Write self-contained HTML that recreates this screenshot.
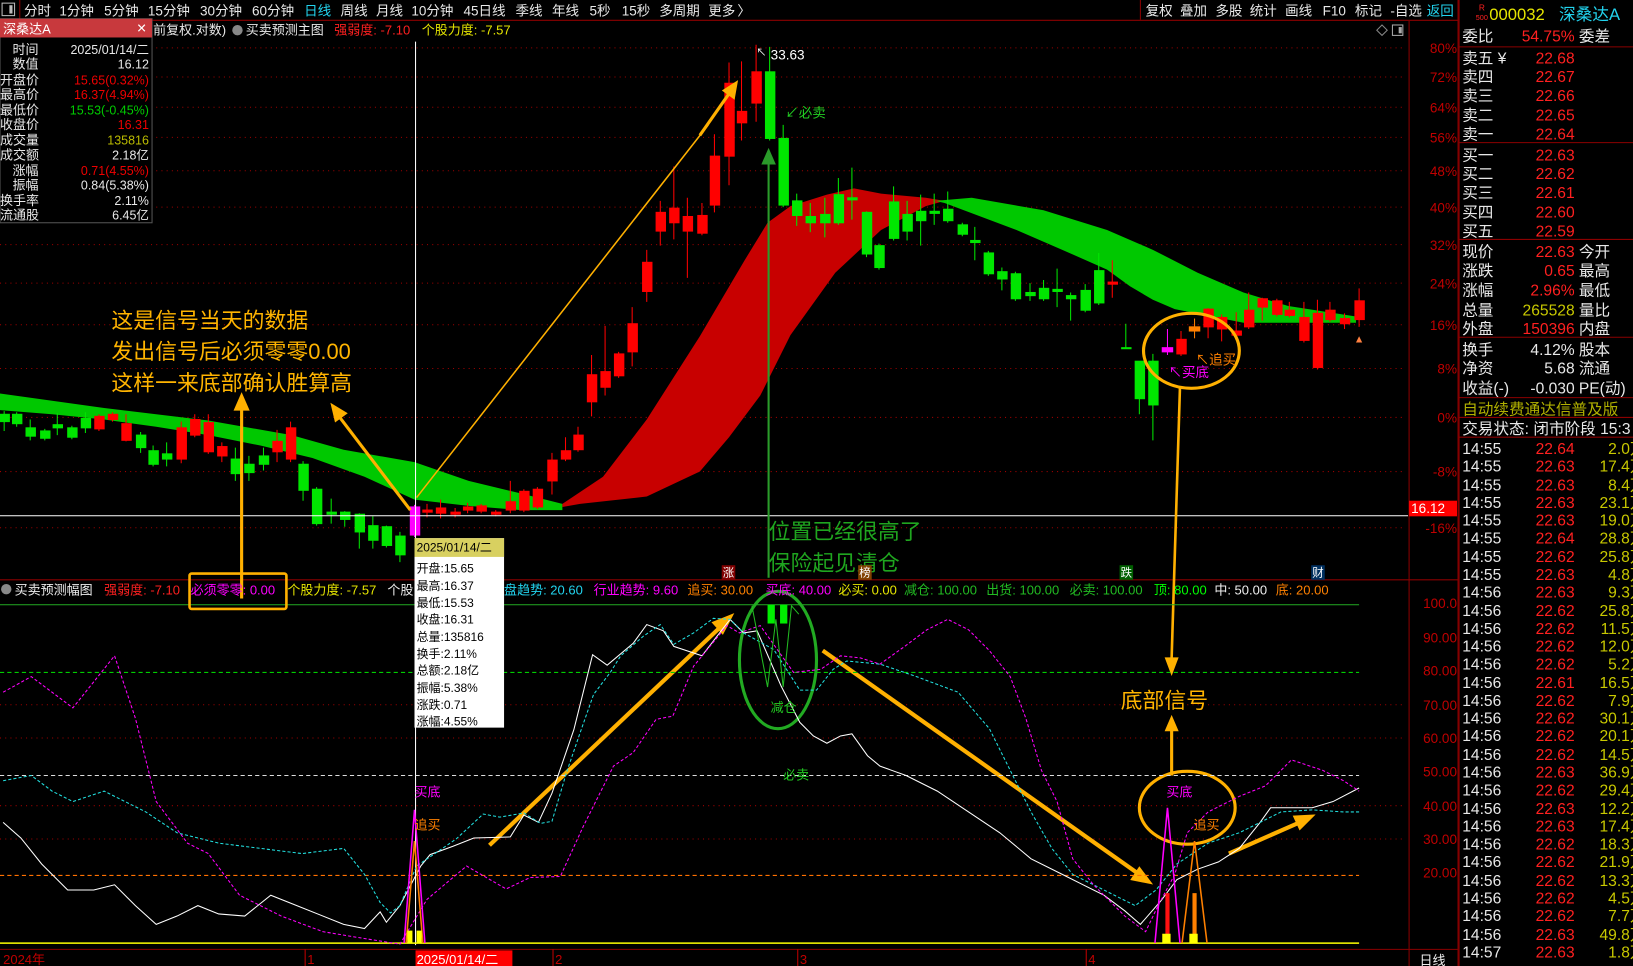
<!DOCTYPE html>
<html><head><meta charset="utf-8"><style>
html,body{margin:0;padding:0;background:#000;overflow:hidden}
svg{display:block}
text{font-family:"Liberation Sans","Noto Sans CJK SC",sans-serif}
</style></head><body>
<svg width="1633" height="966" viewBox="0 0 1568 928" preserveAspectRatio="none" xmlns="http://www.w3.org/2000/svg">
<rect width="1568" height="928" fill="#000"/>
<!-- top bar -->
<g font-size="13" fill="#e8e8e8">
<rect x="2" y="3" width="12" height="12" fill="none" stroke="#bbb"/><rect x="9" y="5" width="3" height="8" fill="#bbb"/>
<line x1="19" y1="0" x2="19" y2="19" stroke="#8b0000"/>
<text x="23" y="15">分时</text><text x="57" y="15">1分钟</text><text x="100" y="15">5分钟</text><text x="142" y="15">15分钟</text><text x="192" y="15">30分钟</text><text x="242" y="15">60分钟</text><text x="292" y="15" fill="#22d3ee">日线</text><text x="327" y="15">周线</text><text x="361" y="15">月线</text><text x="395" y="15">10分钟</text><text x="445" y="15">45日线</text><text x="495" y="15">季线</text><text x="530" y="15">年线</text><text x="566" y="15">5秒</text><text x="597" y="15">15秒</text><text x="633" y="15">多周期</text><text x="680" y="15">更多</text><text x="708" y="15">〉</text>
<text x="1100" y="15">复权</text><text x="1133" y="15">叠加</text><text x="1167" y="15">多股</text><text x="1200" y="15">统计</text><text x="1234" y="15">画线</text><text x="1270" y="15">F10</text><text x="1301" y="15">标记</text><text x="1335" y="15">-自选</text><text x="1370" y="15" fill="#22d3ee">返回</text>
</g>
<line x1="0" y1="19.5" x2="1400" y2="19.5" stroke="#8b0000"/>
<line x1="1095" y1="0" x2="1095" y2="19" stroke="#8b0000"/><line x1="1400" y1="0" x2="1400" y2="928" stroke="#8b0000"/>
<!-- second header -->
<g font-size="12.5">
<text x="147" y="33" fill="#e8e8e8">前复权.对数)</text>
<circle cx="228" cy="29" r="5" fill="#888"/>
<text x="236" y="33" fill="#e8e8e8">买卖预测主图</text>
<text x="321" y="33" fill="#ff2020">强弱度: -7.10</text>
<text x="405" y="33" fill="#e6e600">个股力度: -7.57</text>
</g>
<path d="M1322 29l5-5 5 5-5 5z" fill="none" stroke="#888"/><rect x="1337" y="24" width="10" height="10" fill="none" stroke="#aaa"/><rect x="1343" y="26" width="3" height="6" fill="#aaa"/>
<!-- axis column -->
<line x1="1353" y1="20" x2="1353" y2="928" stroke="#8b0000"/>
<line x1="0" y1="557" x2="1400" y2="557" stroke="#8b0000"/>
<!-- grid main -->
<g stroke="#a00000" stroke-dasharray="1,4">
<line x1="0" y1="46" x2="1350" y2="46"/><line x1="0" y1="74" x2="1350" y2="74"/><line x1="0" y1="103" x2="1350" y2="103"/><line x1="0" y1="132" x2="1350" y2="132"/><line x1="0" y1="164" x2="1350" y2="164"/><line x1="0" y1="199" x2="1350" y2="199"/><line x1="0" y1="235" x2="1350" y2="235"/><line x1="0" y1="272" x2="1350" y2="272"/><line x1="0" y1="312" x2="1350" y2="312"/><line x1="0" y1="354" x2="1350" y2="354"/><line x1="0" y1="401" x2="1350" y2="401"/><line x1="0" y1="453" x2="1350" y2="453"/><line x1="0" y1="507" x2="1350" y2="507"/>
<line x1="0" y1="709" x2="1350" y2="709"/><line x1="0" y1="677" x2="1350" y2="677"/><line x1="0" y1="774" x2="1350" y2="774"/><line x1="0" y1="806" x2="1350" y2="806"/>
</g>
<g font-size="13" fill="#c00000" text-anchor="end">
<text x="1399" y="51">80%</text><text x="1399" y="79">72%</text><text x="1399" y="108">64%</text><text x="1399" y="137">56%</text><text x="1399" y="169">48%</text><text x="1399" y="204">40%</text><text x="1399" y="240">32%</text><text x="1399" y="277">24%</text><text x="1399" y="317">16%</text><text x="1399" y="359">8%</text><text x="1399" y="406">0%</text><text x="1399" y="458">-8%</text><text x="1399" y="512">-16%</text>
<text x="1399" y="584">100.0</text><text x="1399" y="617">90.00</text><text x="1399" y="649">80.00</text><text x="1399" y="682">70.00</text><text x="1399" y="714">60.00</text><text x="1399" y="746">50.00</text><text x="1399" y="779">40.00</text><text x="1399" y="811">30.00</text><text x="1399" y="843">20.00</text>
</g>
<!-- bands -->
<path d="M0 378 L100 392 L200 404 L280 418 L330 432 L398 444 L450 462 L500 474 L540 484 L540 490 L500 490 L450 486 L398 480 L350 458 L300 440 L250 428 L200 418 L150 410 L100 403 L50 398 L0 394Z" fill="#00c800"/>
<path d="M540 484 L579 458 L621 403 L672 323 L715 250 L737 214 L759 198 L794 187 L820 181 L846 186 L889 190 L907 193 L889 198 L846 221 L802 262 L759 322 L730 380 L700 420 L672 453 L621 477 L557 484 L540 487Z" fill="#c80000"/>
<path d="M898 193 L933 190 L1002 202 L1063 221 L1107 240 L1150 262 L1194 281 L1237 294 L1302 304 L1302 310 L1194 310 L1128 297 L1107 288 L1085 275 L1063 259 L1020 240 L976 221 L907 195Z" fill="#00c800"/>
<!-- candles green -->
<g fill="#00e600" stroke="#00e600" stroke-width="1">
<path d="M4 395V414M16 396V410M29 403V423M43 412V423M55 397V418M69 409V422M82 396V416M135 415V435M147 428V448M160 425V448M226 430V462M239 438V462M253 430V452M291 443V481M304 468V505M318 479V503M331 491V506M345 493V527M358 496V527M371 505V526M384 511V540M739 45V135M752 120V199M765 186V217M778 195V223M792 190V228M805 171V216M818 161V211M832 203V247M844 234V259M858 179V231M871 193V231M884 187V236M897 186V216M910 184V214M924 214V227M936 218V250M949 241V265M962 257V279M975 261V289M989 272V289M1002 269V289M1015 258V295M1028 281V308M1042 273V300M1055 243V293M1081 311V335M1094 347V398M1107 340V423"/>
<rect x="0" y="398" width="9" height="7"/><rect x="12" y="398" width="9" height="9"/><rect x="25" y="411" width="9" height="8"/><rect x="39" y="414" width="9" height="7"/><rect x="51" y="408" width="9" height="3"/><rect x="65" y="411" width="9" height="9"/><rect x="78" y="402" width="9" height="9"/><rect x="131" y="418" width="9" height="12"/><rect x="143" y="433" width="9" height="13"/><rect x="156" y="436" width="9" height="5"/><rect x="222" y="441" width="9" height="14"/><rect x="235" y="446" width="9" height="8"/><rect x="249" y="438" width="9" height="8"/><rect x="287" y="446" width="9" height="25"/><rect x="300" y="470" width="9" height="33"/><rect x="314" y="492" width="9" height="2"/><rect x="327" y="492" width="9" height="7"/><rect x="341" y="494" width="9" height="17"/><rect x="354" y="505" width="9" height="14"/><rect x="367" y="506" width="9" height="18"/><rect x="380" y="515" width="9" height="18"/>
<rect x="735" y="69" width="9" height="64"/><rect x="748" y="133" width="9" height="64"/><rect x="761" y="193" width="9" height="14"/><rect x="774" y="208" width="9" height="6"/><rect x="788" y="206" width="9" height="8"/><rect x="801" y="187" width="9" height="27"/><rect x="814" y="190" width="9" height="2"/><rect x="828" y="204" width="9" height="40"/><rect x="840" y="236" width="9" height="21"/><rect x="854" y="194" width="9" height="35"/><rect x="867" y="206" width="9" height="16"/><rect x="880" y="203" width="9" height="9"/><rect x="893" y="203" width="9" height="2"/><rect x="906" y="201" width="9" height="11"/><rect x="920" y="216" width="9" height="9"/><rect x="932" y="231" width="9" height="2"/><rect x="945" y="243" width="9" height="20"/><rect x="958" y="261" width="9" height="7"/><rect x="971" y="263" width="9" height="24"/><rect x="985" y="281" width="9" height="3"/><rect x="998" y="277" width="9" height="10"/><rect x="1011" y="278" width="9" height="2"/><rect x="1024" y="284" width="9" height="3"/><rect x="1038" y="279" width="9" height="19"/><rect x="1051" y="260" width="9" height="31"/><rect x="1077" y="334" width="9" height="1"/><rect x="1090" y="347" width="9" height="36"/><rect x="1103" y="347" width="9" height="42"/>
</g>
<g fill="#ff0000" stroke="#ff0000">
<path d="M95 398V414M108 396V405M121 398V424M174 405V445M187 398V420M200 398V436M213 425V444M266 413V444M279 405V444M410 484V497M423 480V498M437 488V497M449 483V493M462 484V493M476 490V496M490 462V493M503 470V492M516 468V489M530 435V475M543 420V443M555 410V434M568 341V400M581 313V380M594 338V363M607 295V352M621 240V290M634 193V236M647 160V230M660 190V267M674 195V226M686 129V204M700 60V178M712 59V135M726 43V117M1068 250V286M1134 318V342M1160 296V325M1173 302V328M1187 300V324M1199 281V316M1212 286V308M1226 287V304M1238 290V305M1252 290V329M1265 288V355M1277 290V309M1291 301V316M1305 277V314"/>
<rect x="91" y="400" width="9" height="12"/><rect x="104" y="398" width="9" height="5"/><rect x="117" y="407" width="9" height="16"/><rect x="170" y="411" width="9" height="30"/><rect x="183" y="403" width="9" height="15"/><rect x="196" y="406" width="9" height="28"/><rect x="209" y="429" width="9" height="9"/><rect x="262" y="424" width="9" height="10"/><rect x="275" y="411" width="9" height="30"/>
<rect x="406" y="490" width="9" height="2"/><rect x="419" y="488" width="9" height="5"/><rect x="433" y="492" width="9" height="2"/><rect x="445" y="487" width="9" height="3"/><rect x="458" y="486" width="9" height="5"/><rect x="472" y="492" width="9" height="2"/><rect x="486" y="482" width="9" height="8"/><rect x="499" y="472" width="9" height="18"/><rect x="512" y="470" width="9" height="17"/><rect x="526" y="442" width="9" height="20"/><rect x="539" y="433" width="9" height="8"/><rect x="551" y="418" width="9" height="14"/><rect x="564" y="360" width="9" height="26"/><rect x="577" y="357" width="9" height="15"/><rect x="590" y="340" width="9" height="21"/><rect x="603" y="311" width="9" height="27"/><rect x="617" y="252" width="9" height="28"/><rect x="630" y="204" width="9" height="18"/><rect x="643" y="200" width="9" height="14"/><rect x="656" y="208" width="9" height="14"/><rect x="670" y="207" width="9" height="17"/><rect x="682" y="150" width="9" height="47"/><rect x="696" y="80" width="9" height="70"/><rect x="708" y="107" width="9" height="11"/><rect x="722" y="69" width="9" height="30"/>
<rect x="1064" y="271" width="9" height="2"/><rect x="1130" y="326" width="9" height="14"/><rect x="1156" y="297" width="9" height="17"/><rect x="1169" y="305" width="9" height="11"/><rect x="1183" y="318" width="9" height="4"/><rect x="1195" y="298" width="9" height="16"/><rect x="1208" y="287" width="9" height="8"/><rect x="1222" y="289" width="9" height="13"/><rect x="1234" y="298" width="9" height="5"/><rect x="1248" y="305" width="9" height="22"/><rect x="1261" y="301" width="9" height="52"/><rect x="1273" y="298" width="9" height="9"/><rect x="1287" y="306" width="9" height="5"/><rect x="1301" y="289" width="9" height="18"/>
</g>
<g fill="#ff00ff" stroke="#ff00ff"><path d="M398 485V516M1121 316V341"/><rect x="394" y="487" width="9" height="27"/><rect x="1116" y="334" width="10" height="4"/></g>
<g fill="#ff8000" stroke="#ff8000"><path d="M1147 306V325"/><rect x="1142" y="314" width="10" height="4"/></g>
<path d="M1305 323l-3 6h6z" fill="#ff8040"/>
<!-- cursor lines -->
<line x1="399" y1="40" x2="399" y2="908" stroke="#fff"/>
<line x1="0" y1="495.5" x2="1352" y2="495.5" stroke="#fff"/>
<rect x="1353" y="481" width="46" height="15" fill="#ff0000"/><text x="1355" y="493" font-size="13" fill="#fff">16.12</text>
<!-- main annotations -->
<text x="740" y="57" font-size="13" fill="#fff">33.63</text><text x="726" y="54" font-size="10" fill="#fff">↖</text>
<text x="754" y="113" font-size="13" fill="#22cc22">↙必卖</text>
<g font-size="21" fill="#ffb400">
<text x="107" y="315">这是信号当天的数据</text>
<text x="107" y="345">发出信号后必须零零0.00</text>
<text x="107" y="375">这样一来底部确认胜算高</text>
</g>
<g stroke="#ffb000" fill="#ffb000">
<line x1="232" y1="575" x2="232" y2="392" stroke-width="3"/><path d="M232 378l-7 16h14z"/>
<line x1="394" y1="490" x2="324" y2="398" stroke-width="3"/><path d="M318 388l4 17 11-8z"/>
<line x1="400" y1="478" x2="680" y2="120" stroke-width="1.5"/><line x1="672" y1="130" x2="700" y2="90" stroke-width="3"/><path d="M708 78l-14 9 11 8z"/>
<line x1="1133" y1="372" x2="1125" y2="632" stroke-width="2.5"/><path d="M1125 648l-6-16h12z"/>
<line x1="1125" y1="745" x2="1125" y2="700" stroke-width="3"/><path d="M1125 688l-6 14h12z"/>
<line x1="470" y1="812" x2="690" y2="604" stroke-width="4"/><path d="M704 590l-20 8 10 11z"/>
<line x1="790" y1="625" x2="1094" y2="840" stroke-width="4"/><path d="M1106 849l-20-4 8-12z"/>
<line x1="1180" y1="820" x2="1248" y2="790" stroke-width="4"/><path d="M1262 783l-20 1 6 13z"/>
</g>
<g fill="none" stroke-width="3">
<ellipse cx="1144" cy="337" rx="46" ry="36" stroke="#ffb000"/>
<ellipse cx="1140" cy="776" rx="46" ry="35" stroke="#ffb000"/>
<ellipse cx="747" cy="634" rx="37" ry="66" stroke="#22aa22"/>
</g>
<line x1="738" y1="555" x2="738" y2="156" stroke="#2a9b2a" stroke-width="2"/><path d="M738 142l-7 16h14z" fill="#2a9b2a"/>
<g font-size="21" fill="#1fa51f"><text x="738" y="518">位置已经很高了</text><text x="738" y="548">保险起见清仓</text></g>
<text x="1148" y="350" font-size="13" fill="#ff8000">↖追买</text>
<text x="1122" y="362" font-size="13" fill="#ff00ff">↖买底</text>
<text x="1076" y="680" font-size="21" fill="#ffb400">底部信号</text>
<g font-size="11" fill="#fff">
<rect x="693" y="543" width="13" height="14" fill="#800000"/><text x="694" y="554">涨</text>
<rect x="824" y="543" width="13" height="14" fill="#804000"/><text x="825" y="554">榜</text>
<rect x="1075" y="543" width="13" height="14" fill="#006000"/><text x="1076" y="554">跌</text>
<rect x="1259" y="543" width="13" height="14" fill="#003060"/><text x="1260" y="554">财</text>
</g>
<!-- indicator -->
<line x1="0" y1="581" x2="1305" y2="581" stroke="#22aa22"/>
<g stroke-dasharray="4,3"><line x1="0" y1="646" x2="1305" y2="646" stroke="#00cc00"/><line x1="0" y1="745" x2="1305" y2="745" stroke="#ddd"/><line x1="0" y1="841" x2="1305" y2="841" stroke="#ff7000"/></g>
<line x1="0" y1="906" x2="1305" y2="906" stroke="#ffff00" stroke-width="1.5"/>
<g fill="none" stroke-width="1">
<polyline stroke="#fff" points="3,790 20,805 40,830 65,855 90,855 110,850 130,870 150,888 170,880 190,870 210,878 235,880 260,860 285,870 305,878 330,888 350,892 365,876 371,886 384,870 404,832 413,821 435,813 455,805 490,804 503,783 517,790 530,762 551,701 569,629 583,639 608,618 621,600 637,606 647,621 674,630 701,595 714,608 727,606 750,659 768,694 781,707 794,714 807,707 818,705 833,726 845,736 870,745 900,760 930,780 960,800 990,825 1020,840 1040,850 1060,860 1080,875 1095,888 1115,865 1130,845 1150,835 1170,828 1190,815 1210,790 1220,776 1260,776 1280,770 1305,757"/>
<polyline stroke="#22e0e0" stroke-dasharray="3,2" points="3,750 30,745 50,760 70,770 100,760 140,780 170,800 210,810 250,815 290,820 330,815 350,840 365,867 375,877 384,870 400,832 438,806 464,782 480,785 503,781 519,791 530,789 544,742 557,704 570,667 586,646 596,630 618,611 634,600 647,619 666,608 685,594 701,595 714,608 743,624 768,663 784,663 800,643 813,635 845,638 880,650 920,665 950,700 970,740 990,780 1010,815 1030,840 1060,855 1090,870 1110,855 1130,830 1160,810 1190,800 1210,790 1230,780 1260,778 1290,780 1305,780"/>
<polyline stroke="#ff00ff" stroke-dasharray="3,2" points="3,665 30,650 70,680 110,630 130,690 150,770 180,810 200,820 230,860 270,880 310,895 340,900 365,904 384,907 410,864 448,832 486,854 509,843 538,842 560,794 589,736 608,723 630,691 646,688 666,640 698,601 710,608 730,601 762,646 788,643 807,630 826,632 845,638 870,620 890,605 910,595 930,605 950,625 970,650 985,690 1000,740 1015,770 1030,825 1050,850 1080,880 1100,895 1112,870 1128,840 1140,800 1160,780 1190,765 1215,755 1240,730 1270,740 1290,750 1305,760"/>
<polyline stroke="#ff00ff" stroke-width="1.5" points="388,906 398,778 408,906"/>
<polyline stroke="#ff8000" stroke-width="1.5" points="390,906 398,808 406,906"/>
<polyline stroke="#ff00ff" stroke-width="1.5" points="1109,906 1121,776 1133,906"/>
<polyline stroke="#ff8000" stroke-width="1.5" points="1135,906 1147,808 1159,906"/>
<polyline stroke="#22bb22" points="722,582 737,660 745,595 752,660 760,582 767,590"/>
</g>
<rect x="391" y="894" width="5" height="12" fill="#ffff00"/><rect x="400" y="894" width="5" height="12" fill="#ffff00"/>
<rect x="1119" y="858" width="4" height="48" fill="#ff1010"/><rect x="1145" y="858" width="4" height="48" fill="#ff8000"/>
<rect x="1116" y="897" width="8" height="9" fill="#ffff00"/><rect x="1142" y="897" width="8" height="9" fill="#ffff00"/>
<rect x="737" y="581" width="7" height="18" fill="#00ee00"/><rect x="749" y="581" width="7" height="18" fill="#00ee00"/>
<g font-size="12.5">
<text x="740" y="684" fill="#22cc22">减仓</text><text x="752" y="749" fill="#22cc22">必卖</text>
<text x="398" y="765" fill="#ff00ff">买底</text><text x="398" y="797" fill="#ff8000">追买</text>
<text x="1120" y="765" fill="#ff00ff">买底</text><text x="1146" y="797" fill="#ff8000">追买</text>
</g>
<!-- indicator header -->
<g font-size="12.5">
<circle cx="6" cy="566" r="5" fill="#888"/>
<text x="14" y="571" fill="#eee">买卖预测幅图</text>
<text x="100" y="571" fill="#ff2020">强弱度: -7.10</text>
<text x="183" y="571" fill="#ff00ff">必须零零: 0.00</text>
<text x="276" y="571" fill="#e6e600">个股力度: -7.57</text>
<text x="372" y="571" fill="#eee">个股</text>
<text x="484" y="571" fill="#22d3ee">盘趋势: 20.60</text>
<text x="570" y="571" fill="#ff00ff">行业趋势: 9.60</text>
<text x="660" y="571" fill="#ff8000">追买: 30.00</text>
<text x="735" y="571" fill="#ff00ff">买底: 40.00</text>
<text x="805" y="571" fill="#e6e600">必买: 0.00</text>
<text x="868" y="571" fill="#22bb22">减仓: 100.00</text>
<text x="947" y="571" fill="#22bb22">出货: 100.00</text>
<text x="1027" y="571" fill="#22bb22">必卖: 100.00</text>
<text x="1108" y="571" fill="#00ff00">顶: 80.00</text>
<text x="1166" y="571" fill="#eee">中: 50.00</text>
<text x="1225" y="571" fill="#ff8000">底: 20.00</text>
</g>
<rect x="182" y="551" width="93" height="34" fill="none" stroke="#ffb000" stroke-width="2.5" rx="2"/>
<!-- tooltip -->
<rect x="398" y="517" width="86" height="182" fill="#fff"/>
<rect x="398" y="517" width="86" height="18" fill="#d8d060"/>
<g font-size="11.5" fill="#000">
<text x="400" y="530">2025/01/14/二</text>
<text x="400" y="550">开盘:15.65</text><text x="400" y="567">最高:16.37</text><text x="400" y="583">最低:15.53</text><text x="400" y="599">收盘:16.31</text><text x="400" y="616">总量:135816</text><text x="400" y="632">换手:2.11%</text><text x="400" y="648">总额:2.18亿</text><text x="400" y="665">振幅:5.38%</text><text x="400" y="681">涨跌:0.71</text><text x="400" y="697">涨幅:4.55%</text>
</g>
<!-- bottom axis -->
<line x1="0" y1="912" x2="1400" y2="912" stroke="#8b0000"/>
<g font-size="12.5" fill="#c00000">
<text x="3" y="926">2024年</text><line x1="293" y1="912" x2="293" y2="928" stroke="#c00000"/><text x="295" y="926">1</text>
<line x1="531" y1="912" x2="531" y2="928" stroke="#c00000"/><text x="533" y="926">2</text>
<line x1="766" y1="912" x2="766" y2="928" stroke="#c00000"/><text x="768" y="926">3</text>
<line x1="1043" y1="912" x2="1043" y2="928" stroke="#c00000"/><text x="1045" y="926">4</text>
</g>
<rect x="399" y="913" width="93" height="15" fill="#ff0000"/><text x="400" y="926" font-size="12.5" fill="#fff">2025/01/14/二</text>
<text x="1363" y="927" font-size="12.5" fill="#eee">日线</text>
<!-- info box -->
<rect x="0" y="18" width="146" height="196" fill="#000" stroke="#555"/>
<rect x="0" y="18" width="146" height="18" fill="#c8393d"/>
<text x="3" y="32" font-size="12.5" fill="#fff">深桑达A</text><text x="131" y="31" font-size="12" fill="#fff">✕</text>
<g font-size="12.5" fill="#e8e8e8">
<text x="12" y="52">时间</text><text x="12" y="66">数值</text><text x="0" y="81">开盘价</text><text x="0" y="95">最高价</text><text x="0" y="110">最低价</text><text x="0" y="124">收盘价</text><text x="0" y="139">成交量</text><text x="0" y="153">成交额</text><text x="12" y="168">涨幅</text><text x="12" y="182">振幅</text><text x="0" y="197">换手率</text><text x="0" y="211">流通股</text>
</g>
<g font-size="12" text-anchor="end">
<text x="143" y="52" fill="#e8e8e8">2025/01/14/二</text><text x="143" y="66" fill="#e8e8e8">16.12</text>
<text x="143" y="81" fill="#e00">15.65(0.32%)</text><text x="143" y="95" fill="#e00">16.37(4.94%)</text><text x="143" y="110" fill="#0c0">15.53(-0.45%)</text><text x="143" y="124" fill="#e00">16.31</text><text x="143" y="139" fill="#bb0">135816</text><text x="143" y="153" fill="#e8e8e8">2.18亿</text><text x="143" y="168" fill="#e00">0.71(4.55%)</text><text x="143" y="182" fill="#e8e8e8">0.84(5.38%)</text><text x="143" y="197" fill="#e8e8e8">2.11%</text><text x="143" y="211" fill="#e8e8e8">6.45亿</text>
</g>
<!-- right panel -->
<g stroke="#8b0000"><line x1="1401" y1="0" x2="1401" y2="928"/><line x1="1401" y1="45" x2="1568" y2="45"/><line x1="1401" y1="137" x2="1568" y2="137"/><line x1="1401" y1="230" x2="1568" y2="230"/><line x1="1401" y1="324" x2="1568" y2="324"/><line x1="1401" y1="382" x2="1568" y2="382"/><line x1="1401" y1="401" x2="1568" y2="401"/><line x1="1401" y1="420" x2="1568" y2="420"/></g>
<text x="1420" y="10" font-size="8" fill="#ff2020">R</text><text x="1417" y="19" font-size="7" fill="#ff2020">500</text>
<text x="1430" y="19" font-size="16" fill="#e6e600">000032</text><text x="1497" y="19" font-size="16" fill="#22d3ee">深桑达A</text>
<g font-size="15" fill="#e8e8e8">
<text x="1404" y="40">委比</text><text x="1516" y="40">委差</text>
<text x="1404" y="61">卖五 ¥</text><text x="1404" y="79">卖四</text><text x="1404" y="97">卖三</text><text x="1404" y="116">卖二</text><text x="1404" y="134">卖一</text>
<text x="1404" y="154">买一</text><text x="1404" y="172">买二</text><text x="1404" y="190">买三</text><text x="1404" y="209">买四</text><text x="1404" y="227">买五</text>
<text x="1404" y="247">现价</text><text x="1404" y="265">涨跌</text><text x="1404" y="284">涨幅</text><text x="1404" y="303">总量</text><text x="1404" y="321">外盘</text>
<text x="1516" y="247">今开</text><text x="1516" y="265">最高</text><text x="1516" y="284">最低</text><text x="1516" y="303">量比</text><text x="1516" y="321">内盘</text>
<text x="1404" y="341">换手</text><text x="1404" y="359">净资</text><text x="1404" y="378">收益(-)</text>
<text x="1516" y="341">股本</text><text x="1516" y="359">流通</text><text x="1516" y="378">PE(动)</text>
<text x="1404" y="398" fill="#b0b000">自动续费通达信普及版</text>
<text x="1404" y="417">交易状态: 闭市阶段 15:3</text>
</g>
<g font-size="15" text-anchor="end" fill="#ff2020">
<text x="1512" y="40">54.75%</text>
<text x="1512" y="61">22.68</text><text x="1512" y="79">22.67</text><text x="1512" y="97">22.66</text><text x="1512" y="116">22.65</text><text x="1512" y="134">22.64</text>
<text x="1512" y="154">22.63</text><text x="1512" y="172">22.62</text><text x="1512" y="190">22.61</text><text x="1512" y="209">22.60</text><text x="1512" y="227">22.59</text>
<text x="1512" y="247">22.63</text><text x="1512" y="265">0.65</text><text x="1512" y="284">2.96%</text><text x="1512" y="303" fill="#c8c800">265528</text><text x="1512" y="321">150396</text>
<text x="1512" y="341" fill="#e8e8e8">4.12%</text><text x="1512" y="359" fill="#e8e8e8">5.68</text><text x="1512" y="378" fill="#e8e8e8">-0.030</text>
</g>
<g font-size="15">
<g fill="#e8e8e8">
<text x="1404" y="436">14:55</text><text x="1404" y="453">14:55</text><text x="1404" y="471">14:55</text><text x="1404" y="488">14:55</text><text x="1404" y="505">14:55</text><text x="1404" y="522">14:55</text><text x="1404" y="540">14:55</text><text x="1404" y="557">14:55</text><text x="1404" y="574">14:56</text><text x="1404" y="592">14:56</text><text x="1404" y="609">14:56</text><text x="1404" y="626">14:56</text><text x="1404" y="643">14:56</text><text x="1404" y="661">14:56</text><text x="1404" y="678">14:56</text><text x="1404" y="695">14:56</text><text x="1404" y="712">14:56</text><text x="1404" y="730">14:56</text><text x="1404" y="747">14:56</text><text x="1404" y="764">14:56</text><text x="1404" y="782">14:56</text><text x="1404" y="799">14:56</text><text x="1404" y="816">14:56</text><text x="1404" y="833">14:56</text><text x="1404" y="851">14:56</text><text x="1404" y="868">14:56</text><text x="1404" y="885">14:56</text><text x="1404" y="903">14:56</text><text x="1404" y="920">14:57</text>
</g>
<g fill="#ff2020" text-anchor="end">
<text x="1512" y="436">22.64</text><text x="1512" y="453">22.63</text><text x="1512" y="471">22.63</text><text x="1512" y="488">22.63</text><text x="1512" y="505">22.63</text><text x="1512" y="522">22.64</text><text x="1512" y="540">22.62</text><text x="1512" y="557">22.63</text><text x="1512" y="574">22.63</text><text x="1512" y="592">22.62</text><text x="1512" y="609">22.62</text><text x="1512" y="626">22.62</text><text x="1512" y="643">22.62</text><text x="1512" y="661">22.61</text><text x="1512" y="678">22.62</text><text x="1512" y="695">22.62</text><text x="1512" y="712">22.62</text><text x="1512" y="730">22.62</text><text x="1512" y="747">22.63</text><text x="1512" y="764">22.62</text><text x="1512" y="782">22.63</text><text x="1512" y="799">22.63</text><text x="1512" y="816">22.62</text><text x="1512" y="833">22.62</text><text x="1512" y="851">22.62</text><text x="1512" y="868">22.62</text><text x="1512" y="885">22.62</text><text x="1512" y="903">22.63</text><text x="1512" y="920">22.63</text>
</g>
<g fill="#c8c800" text-anchor="end">
<text x="1580" y="436">2.0万</text><text x="1580" y="453">17.4万</text><text x="1580" y="471">8.4万</text><text x="1580" y="488">23.1万</text><text x="1580" y="505">19.0万</text><text x="1580" y="522">28.8万</text><text x="1580" y="540">25.8万</text><text x="1580" y="557">4.8万</text><text x="1580" y="574">9.3万</text><text x="1580" y="592">25.8万</text><text x="1580" y="609">11.5万</text><text x="1580" y="626">12.0万</text><text x="1580" y="643">5.2万</text><text x="1580" y="661">16.5万</text><text x="1580" y="678">7.9万</text><text x="1580" y="695">30.1万</text><text x="1580" y="712">20.1万</text><text x="1580" y="730">14.5万</text><text x="1580" y="747">36.9万</text><text x="1580" y="764">29.4万</text><text x="1580" y="782">12.2万</text><text x="1580" y="799">17.4万</text><text x="1580" y="816">18.3万</text><text x="1580" y="833">21.9万</text><text x="1580" y="851">13.3万</text><text x="1580" y="868">4.5万</text><text x="1580" y="885">7.7万</text><text x="1580" y="903">49.8万</text><text x="1580" y="920">1.8万</text>
</g>
</g>
</svg>
</body></html>
